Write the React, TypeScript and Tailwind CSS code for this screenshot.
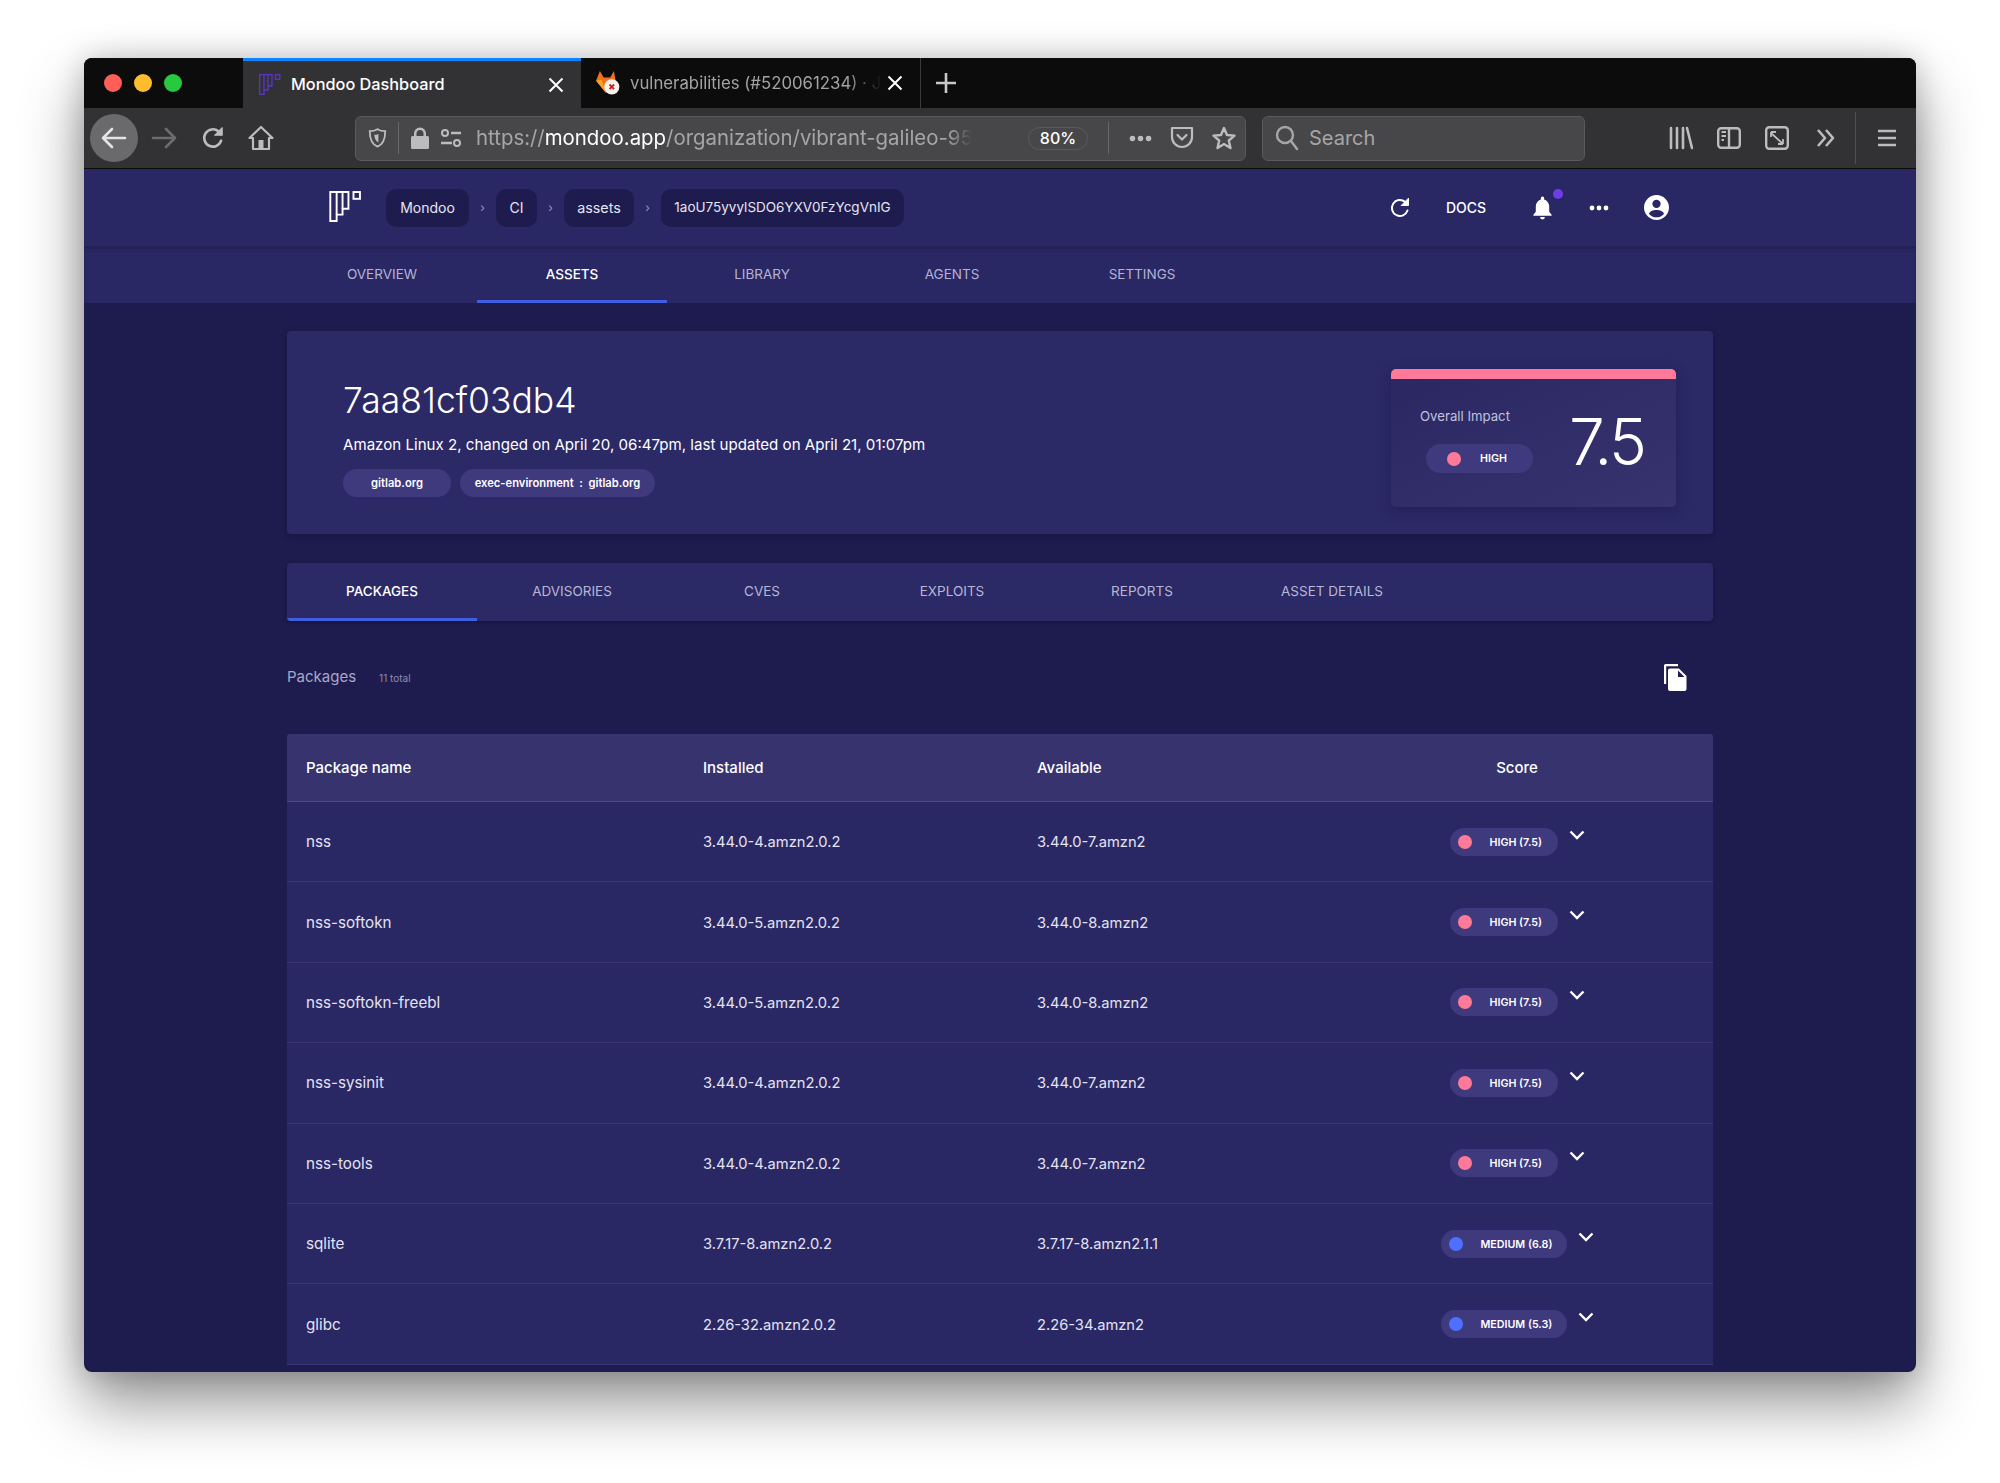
import React from "react";

const Logo = ({ className, stroke }: { className: string; stroke: string }) => (
  <svg viewBox="0 0 22 21" className={className} fill="none" stroke={stroke} strokeWidth="1.3">
    <path d="M.7.7H13V12H9V16H5V20.3H.7Z" />
    <path d="M5 .7V16M9 .7V12" />
    <rect x="16.4" y=".7" width="4.4" height="4.6" />
  </svg>
);

const Dots = ({ cls }: { cls: string }) => (
  <svg viewBox="0 0 20 6" className={cls} fill="currentColor">
    <circle cx="3" cy="3" r="2.4" />
    <circle cx="10" cy="3" r="2.4" />
    <circle cx="17" cy="3" r="2.4" />
  </svg>
);

const Reload = ({ cls, sw = 2 }: { cls: string; sw?: number }) => (
  <svg viewBox="0 0 24 24" className={cls} fill="none" stroke="currentColor" strokeWidth={sw} strokeLinecap="round">
    <path d="M19.5 14.5A8 8 0 1 1 17 5.8L19.5 8" />
    <path d="M20.5 2.5V9.5H13.5Z" fill="currentColor" strokeWidth="1" strokeLinejoin="round" />
  </svg>
);

const Badge = ({ color, label, wide }: { color: string; label: string; wide?: boolean }) => (
  <div className={`flex h-[28px] items-center rounded-full bg-[#3f3a7e] pl-[8px] ${wide ? "w-[126px]" : "w-[108px]"}`}>
    <span className={`h-[14px] w-[14px] shrink-0 rounded-full ${color}`} />
    <span className="ml-[18px] whitespace-nowrap pt-[2px] text-[10.7px] font-semibold text-white">{label}</span>
  </div>
);

const PINK = "bg-[#ff7a98]";
const BLUE = "bg-[#4d70ff]";

const rows = [
  ["nss", "3.44.0-4.amzn2.0.2", "3.44.0-7.amzn2", "HIGH (7.5)", PINK, false],
  ["nss-softokn", "3.44.0-5.amzn2.0.2", "3.44.0-8.amzn2", "HIGH (7.5)", PINK, false],
  ["nss-softokn-freebl", "3.44.0-5.amzn2.0.2", "3.44.0-8.amzn2", "HIGH (7.5)", PINK, false],
  ["nss-sysinit", "3.44.0-4.amzn2.0.2", "3.44.0-7.amzn2", "HIGH (7.5)", PINK, false],
  ["nss-tools", "3.44.0-4.amzn2.0.2", "3.44.0-7.amzn2", "HIGH (7.5)", PINK, false],
  ["sqlite", "3.7.17-8.amzn2.0.2", "3.7.17-8.amzn2.1.1", "MEDIUM (6.8)", BLUE, true],
  ["glibc", "2.26-32.amzn2.0.2", "2.26-34.amzn2", "MEDIUM (5.3)", BLUE, true],
] as const;

const navTabs = ["OVERVIEW", "ASSETS", "LIBRARY", "AGENTS", "SETTINGS"];
const subTabs = ["PACKAGES", "ADVISORIES", "CVES", "EXPLOITS", "REPORTS", "ASSET DETAILS"];
const crumbs = [
  ["Mondoo", "w-[83px] text-[14px]"],
  ["CI", "w-[41px] text-[14px]"],
  ["assets", "w-[70px] text-[14.3px]"],
  ["1aoU75yvylSDO6YXV0FzYcgVnIG", "w-[243px] text-[13.5px]"],
];

function TabBar() {
  return (
    <div className="flex h-[50px] bg-[#0c0c0d]">
      <div className="flex w-[159px] items-center gap-[12px] pl-[20px]">
        <span className="h-[18px] w-[18px] rounded-full bg-[#ff5f57]" />
        <span className="h-[18px] w-[18px] rounded-full bg-[#ffbd2e]" />
        <span className="h-[18px] w-[18px] rounded-full bg-[#28c940]" />
      </div>
      <div className="flex w-[338px] items-center border-t-[3px] border-[#0a84ff] bg-[#323234] pl-[16px] text-white">
        <Logo className="h-[21px] w-[22px]" stroke="#5b35c8" />
        <span className="ml-[10px] text-[16.3px] font-medium">Mondoo Dashboard</span>
        <svg viewBox="0 0 16 16" className="ml-[104px] h-[16px] w-[16px]" stroke="currentColor" strokeWidth="2">
          <path d="M1.5 1.5L14.5 14.5M14.5 1.5L1.5 14.5" />
        </svg>
      </div>
      <div className="flex w-[340px] items-center border-r border-[#3a3a3c] pl-[14px] text-[#a3a3a6]">
        <svg viewBox="0 0 24 22" className="h-[24px] w-[26px] shrink-0">
          <path d="M1 9L4.5 0L8 6H14L17.5 0L19 9L10 20Z" fill="#f2701e" />
          <path d="M1 9L6 8L10 20Z" fill="#fca326" />
          <circle cx="15.5" cy="14.5" r="7" fill="#f7f2ee" />
          <path d="M13.4 12.4L17.6 16.6M17.6 12.4L13.4 16.6" stroke="#c9241b" strokeWidth="1.7" />
        </svg>
        <span className="ml-[9px] w-[252px] overflow-hidden whitespace-nowrap pt-[2px] text-[16.8px] [mask-image:linear-gradient(to_right,black_86%,transparent)]">
          vulnerabilities (#520061234) · J
        </span>
        <svg viewBox="0 0 16 16" className="ml-[5px] h-[16px] w-[16px] text-white" stroke="currentColor" strokeWidth="2">
          <path d="M1.5 1.5L14.5 14.5M14.5 1.5L1.5 14.5" />
        </svg>
      </div>
      <div className="flex w-[50px] items-center justify-center text-[#c8c8c8]">
        <svg viewBox="0 0 22 22" className="h-[22px] w-[22px]" stroke="currentColor" strokeWidth="2.6">
          <path d="M11 1V21M1 11H21" />
        </svg>
      </div>
    </div>
  );
}

function ToolBar() {
  return (
    <div className="flex h-[61px] items-center border-b border-[#0c0c0d] bg-[#323234] text-[#bcbcbe]">
      <div className="ml-[6px] flex h-[48px] w-[48px] shrink-0 items-center justify-center rounded-full bg-[#6a6a6c] text-[#e4e4e4]">
        <svg viewBox="0 0 26 24" className="h-[24px] w-[26px]" fill="none" stroke="currentColor" strokeWidth="2.6" strokeLinecap="round" strokeLinejoin="round">
          <path d="M24 12H2M11 3L2 12L11 21" />
        </svg>
      </div>
      <svg viewBox="0 0 26 24" className="ml-[13px] h-[24px] w-[26px] text-[#6c6c6e]" fill="none" stroke="currentColor" strokeWidth="2.6" strokeLinecap="round" strokeLinejoin="round">
        <path d="M2 12H24M15 3L24 12L15 21" />
      </svg>
      <Reload cls="ml-[23px] h-[26px] w-[26px]" sw={2.4} />
      <svg viewBox="0 0 26 26" className="ml-[22px] h-[26px] w-[26px]" fill="none" stroke="currentColor" strokeWidth="2.2" strokeLinejoin="round">
        <path d="M1.5 13L13 2L24.500 13H21V24H5V13Z" />
        <rect x="10.500" y="15" width="5" height="9" fill="currentColor" stroke="none" />
      </svg>
      <div className="ml-[81px] flex h-[45px] w-[891px] shrink-0 items-center rounded-md border border-[#5a5a5c] bg-[#474749]">
        <svg viewBox="0 0 20 22" className="ml-[12px] h-[20px] w-[19px]" fill="none" stroke="currentColor" strokeWidth="2">
          <path d="M1.500 3.500C4.500 3.500 8 2.500 10 1.300C12 2.500 15.500 3.500 18.500 3.500C18.500 12 16 18 10 20.500C4 18 1.500 12 1.500 3.500Z" />
          <path d="M11 6.500V16C7.500 14 6.500 10.500 6.500 7.500C8 7.500 9.500 7 11 6.500Z" fill="currentColor" stroke="none" />
        </svg>
        <span className="ml-[11px] h-[32px] w-px bg-[#67676e]" />
        <svg viewBox="0 0 18 22" className="ml-[12px] h-[22px] w-[18px]" fill="currentColor">
          <path d="M3 9V6.500a6 6 0 0 1 12 0V9h1.500a1.500 1.500 0 0 1 1.500 1.500v10a1.500 1.500 0 0 1-1.500 1.500h-15A1.500 1.500 0 0 1 0 20.500v-10A1.500 1.500 0 0 1 1.500 9ZM5.500 9h7V6.500a3.500 3.500 0 0 0-7 0Z" />
        </svg>
        <svg viewBox="0 0 22 20" className="ml-[11px] h-[20px] w-[22px]" fill="none" stroke="currentColor" strokeWidth="2">
          <circle cx="5" cy="5" r="3" />
          <path d="M11 5H21M1 15H12" strokeWidth="2.6" />
          <circle cx="17" cy="15" r="3" />
        </svg>
        <div className="ml-[14px] w-[496px] overflow-hidden whitespace-nowrap text-[20.4px] text-[#a6a6a8] [mask-image:linear-gradient(to_right,black_95%,transparent)]">
          https://<span className="text-white">mondoo.app</span>/organization/vibrant-galileo-95
        </div>
        <div className="ml-[56px] flex h-[23px] w-[60px] items-center justify-center rounded-full border border-[#5a5a5c] text-[16px] font-medium text-white">
          80%
        </div>
        <span className="ml-[20px] h-[32px] w-px bg-[#67676e]" />
        <Dots cls="ml-[20px] h-[7px] w-[23px]" />
        <svg viewBox="0 0 24 24" className="ml-[18px] h-[24px] w-[24px]" fill="none" stroke="currentColor" strokeWidth="2.2" strokeLinecap="round" strokeLinejoin="round">
          <path d="M2 2H22V11A10 10 0 0 1 2 11Z" />
          <path d="M7.500 9L12 13.500L16.500 9" />
        </svg>
        <svg viewBox="0 0 24 24" className="ml-[18px] h-[24px] w-[24px]" fill="none" stroke="currentColor" strokeWidth="2.4" strokeLinejoin="round">
          <path d="M12 2L15 9L22.500 9.600L16.800 14.500L18.500 22L12 18L5.500 22L7.200 14.500L1.500 9.600L9 9Z" />
        </svg>
      </div>
      <div className="ml-[16px] flex h-[45px] w-[323px] shrink-0 items-center rounded-md border border-[#5a5a5c] bg-[#474749]">
        <svg viewBox="0 0 24 26" className="ml-[12px] h-[26px] w-[24px] text-[#a6a6a8]" fill="none" stroke="currentColor" strokeWidth="2.4" strokeLinecap="round">
          <circle cx="10" cy="10" r="8" />
          <path d="M16 16L22 24" />
        </svg>
        <span className="ml-[10px] text-[20px] text-[#a6a6a8]">Search</span>
      </div>
      <svg viewBox="0 0 24 24" className="ml-[84px] h-[24px] w-[24px]" stroke="currentColor" strokeWidth="2.6" strokeLinecap="round">
        <path d="M2 2V22M8 2V22M14 2V22M18 2L23 22" />
      </svg>
      <svg viewBox="0 0 24 22" className="ml-[24px] h-[22px] w-[24px]" fill="none" stroke="currentColor" strokeWidth="2.4">
        <rect x="1.200" y="1.200" width="21.600" height="19.600" rx="3" />
        <path d="M12 1V21" />
        <path d="M4.500 5H9M4.500 9H9M4.500 13H7" strokeWidth="2" />
      </svg>
      <svg viewBox="0 0 24 24" className="ml-[24px] h-[24px] w-[24px]" fill="none" stroke="currentColor" strokeWidth="2.4">
        <rect x="1.200" y="1.200" width="21.600" height="21.600" rx="3" />
        <path d="M6 7L18 18M6 6H11M6 6V11M18 18H13M18 18V13" strokeWidth="1.800" />
      </svg>
      <svg viewBox="0 0 20 20" className="ml-[27px] h-[20px] w-[20px]" fill="none" stroke="currentColor" strokeWidth="2.6" strokeLinejoin="round">
        <path d="M2 2L9 10L2 18M10 2L17 10L10 18" />
      </svg>
      <span className="ml-[19px] h-[52px] w-px bg-[#4f4f51]" />
      <svg viewBox="0 0 20 18" className="ml-[21px] h-[18px] w-[20px]" stroke="currentColor" strokeWidth="2.6">
        <path d="M1 2H19M1 9H19M1 16H19" />
      </svg>
    </div>
  );
}

function AppHeader() {
  return (
    <div className="flex h-[77px] items-center bg-[#2a2864] text-white">
      <Logo className="ml-[245px] mt-[-2px] h-[31px] w-[33px]" stroke="#ffffff" />
      <div className="ml-[24px] flex h-[38px] items-center">
        {crumbs.map(([c, w], i) => (
          <React.Fragment key={c}>
            {i > 0 && <span className="flex w-[27px] justify-center text-[12px] text-[#9a98c0]">›</span>}
            <span className={`flex h-[38px] items-center justify-center rounded-[10px] bg-[#1e1c4e] text-[#e6e5f2] ${w}`}>{c}</span>
          </React.Fragment>
        ))}
      </div>
      <Reload cls="ml-[484px] h-[24px] w-[24px]" />
      <span className="ml-[34px] text-[14px] font-medium">DOCS</span>
      <div className="relative ml-[45px]">
        <svg viewBox="0 0 24 26" className="h-[26px] w-[23px]" fill="currentColor">
          <path d="M12 1a1.700 1.700 0 0 1 1.700 1.800V4C17 5 19 8 19 11.500V17l2.500 3v1h-19v-1L5 17v-5.500C5 8 7 5 10.300 4V2.800A1.700 1.700 0 0 1 12 1ZM9.500 22.500h5a2.500 2.500 0 0 1-5 0Z" />
        </svg>
        <span className="absolute right-[-9px] top-[-6px] h-[10px] w-[10px] rounded-full bg-[#6d3de8]" />
      </div>
      <Dots cls="ml-[35px] h-[6px] w-[20px]" />
      <svg viewBox="0 0 24 24" className="ml-[35px] h-[25px] w-[25px]" fill="currentColor">
        <path d="M12 0a12 12 0 1 1 0 24a12 12 0 0 1 0-24ZM12 4.500a4 4 0 1 0 0 8a4 4 0 0 0 0-8ZM12 14.500c-3.500 0-6.500 1.500-7.300 3.500a9.500 9.500 0 0 0 14.600 0c-.8-2-3.800-3.500-7.300-3.500Z" fillRule="evenodd" />
      </svg>
    </div>
  );
}

function NavBar() {
  return (
    <div className="flex h-[57px] border-t border-[#25235a] bg-[#2a2864] pl-[203px] shadow-[inset_0_3px_4px_-2px_rgba(20,18,60,0.5)]">
      {navTabs.map((t) => (
        <div
          key={t}
          className={`flex w-[190px] items-center justify-center border-b-[3px] pt-[1px] text-[13.5px] ${
            t === "ASSETS" ? "border-[#3f5fe0] font-medium text-white" : "border-transparent text-[#b4b2d4]"
          }`}
        >
          {t}
        </div>
      ))}
    </div>
  );
}

function Hero() {
  return (
    <div className="flex h-[203px] justify-between rounded-[4px] bg-[#2b2966] pl-[56px] pr-[37px] pt-[38px] shadow-[0_2px_6px_rgba(15,13,50,0.45)]">
      <div className="pt-[10px] text-white">
        <h1 className="text-[35.5px] font-light leading-[44px]">7aa81cf03db4</h1>
        <p className="mt-[12px] text-[15.1px] leading-[20px]">
          Amazon Linux 2, changed on April 20, 06:47pm, last updated on April 21, 01:07pm
        </p>
        <div className="mt-[14px] flex gap-[9px] text-[11.2px] font-semibold">
          <span className="flex h-[28px] w-[108px] items-center justify-center rounded-full bg-[#3f3a7e]">gitlab.org</span>
          <span className="flex h-[28px] w-[195px] items-center justify-center gap-[6px] rounded-full bg-[#3f3a7e] whitespace-pre">
            exec-environment&nbsp;&nbsp;:&nbsp;&nbsp;gitlab.org
          </span>
        </div>
      </div>
      <div className="h-[138px] w-[285px] overflow-hidden rounded-[5px] bg-gradient-to-br from-[#2a2763] to-[#37336f] shadow-[0_4px_14px_rgba(20,18,60,0.35)]">
        <div className="h-[10px] bg-[#ff7a98]" />
        <div className="flex">
          <div className="pl-[29px] pt-[27px]">
            <div className="text-[13.2px] leading-[20px] text-[#c3c1de]">Overall Impact</div>
            <div className="ml-[6px] mt-[18px] flex h-[29px] w-[107px] items-center rounded-full bg-[#3f3a7e] pl-[21px]">
              <span className={`h-[14px] w-[14px] rounded-full ${PINK}`} />
              <span className="ml-[19px] pt-[2px] text-[10.7px] font-semibold text-white">HIGH</span>
            </div>
          </div>
          <div className="ml-[36px] mt-[28px] text-[64px] font-light leading-[70px] tracking-[-2.5px] text-white">7.5</div>
        </div>
      </div>
    </div>
  );
}

function SubTabs() {
  return (
    <div className="mt-[29px] flex h-[58px] overflow-hidden rounded-[4px] bg-[#2b2966] shadow-[0_2px_4px_rgba(15,13,50,0.4)]">
      {subTabs.map((t, i) => (
        <div
          key={t}
          className={`flex w-[190px] items-center justify-center border-b-[3px] pt-[2px] text-[13.5px] ${
            i === 0 ? "border-[#3f5fe0] font-medium text-white" : "border-transparent text-[#b8b6d6]"
          }`}
        >
          {t}
        </div>
      ))}
    </div>
  );
}

function Table() {
  const cols = "grid grid-cols-[401px_334px_299px_392px]";
  return (
    <div>
      <div className={`${cols} h-[68px] items-center rounded-t-[3px] border-b border-[#4a4688] bg-[#37336f] pt-[2px] text-[15px] font-medium text-white`}>
        <div className="pl-[19px]">Package name</div>
        <div className="pl-[15px]">Installed</div>
        <div className="pl-[15px]">Available</div>
        <div className="text-center">Score</div>
      </div>
      {rows.map(([name, inst, avail, label, color, wide]) => (
        <div key={name} className={`${cols} h-[80.4px] items-center border-b border-[#3a3675] bg-[#2a2864] text-[14.7px] text-[#e4e3f2]`}>
          <div className="pl-[19px] pt-[2px] text-[15.2px]">{name}</div>
          <div className="pl-[15px] pt-[1px]">{inst}</div>
          <div className="pl-[15px] pt-[1px]">{avail}</div>
          <div className="flex items-center justify-center gap-[11px]">
            <Badge color={color} label={label} wide={wide} />
            <svg viewBox="0 0 16 10" className="mb-[14px] h-[10px] w-[16px] text-white" fill="none" stroke="currentColor" strokeWidth="2.4">
              <path d="M1.500 1.500L8 8L14.500 1.500" />
            </svg>
          </div>
        </div>
      ))}
    </div>
  );
}

export default function App() {
  return (
    <div className="h-[1483px] w-[2000px] overflow-hidden bg-white pl-[84px] pt-[58px] font-['Inter',sans-serif]">
      <div className="h-[1314px] w-[1832px] overflow-hidden rounded-[8px] bg-[#1e1c4e] shadow-[0_32px_62px_rgba(0,0,0,0.42),0_0_30px_rgba(0,0,0,0.2)]">
        <TabBar />
        <ToolBar />
        <AppHeader />
        <NavBar />
        <div className="mx-[203px] pt-[28px]">
          <Hero />
          <SubTabs />
          <div className="flex h-[113px] items-center justify-between pr-[26px]">
            <div className="flex items-baseline">
              <span className="text-[15px] text-[#a9a7c9]">Packages</span>
              <span className="ml-[23px] text-[10px] text-[#8f8db2]">11 total</span>
            </div>
            <svg viewBox="0 0 24 27" className="h-[27px] w-[24px]" fill="white">
              <path d="M1 1.500A1.500 1.500 0 0 1 2.500 0H15V2.200H3.200V20H1Z" />
              <path d="M7 4.500H16L23.500 12V25A2 2 0 0 1 21.500 27H7A2 2 0 0 1 5 25V6.500A2 2 0 0 1 7 4.500ZM15 6.500V13H21.500Z" fillRule="evenodd" />
            </svg>
          </div>
          <Table />
        </div>
      </div>
    </div>
  );
}
